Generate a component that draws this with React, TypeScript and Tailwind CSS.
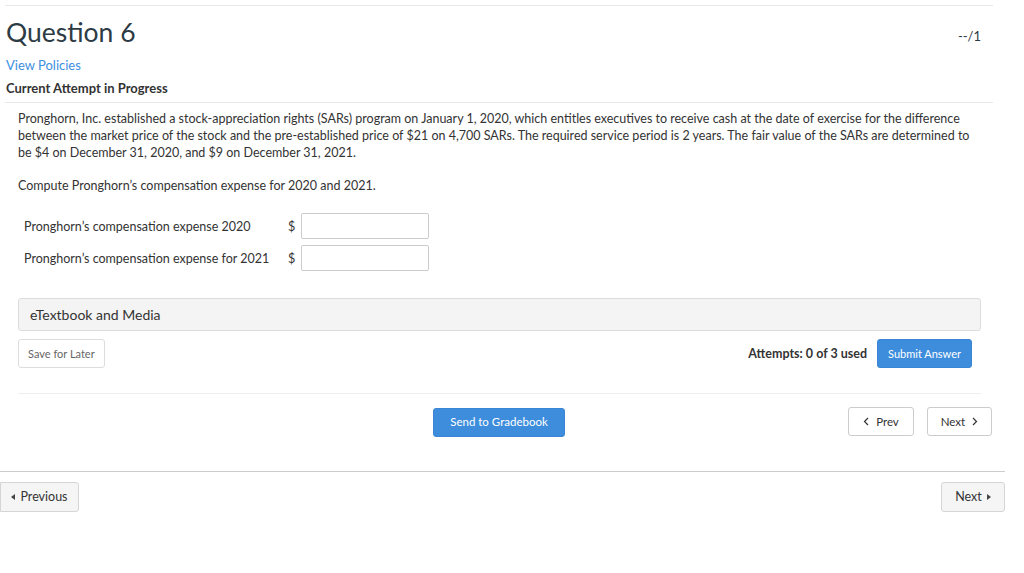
import React from "react";

export default function App() {
  return (
    <div className="w-[1005px] bg-white text-[#333]" style={{ fontFamily: "Lato, 'Open Sans', sans-serif" }}>
      <div className="pl-[5px] pr-[12px]">
        <div className="border-t border-[#e8e8e8] mt-[5px]">
          <div className="flex justify-between items-start pl-[1px] pr-[12px] pt-[9px]">
            <h1 className="text-[26.5px] leading-[34px] text-[#2d3b45]">Question 6</h1>
            <div className="text-[13px] mt-[12px] text-[#2d3b45]">--/1</div>
          </div>
          <div className="pl-[1px] mt-[8px] text-[13px] leading-[16px] text-[#3d8fe0]">View Policies</div>
          <div className="pl-[1px] mt-[7px] text-[13px] leading-[16px] font-bold text-[#333]">Current Attempt in Progress</div>
          <div className="border-t border-[#e8e8e8] mt-[6px]">
            <div className="pl-[13px] pr-[12px] pt-[7px] text-[12.5px] leading-[17px]">
              <p>
                Pronghorn, Inc. established a stock-appreciation rights (SARs) program on January 1, 2020, which entitles executives to receive cash at the date of exercise for the difference between the market price of the stock and the pre-established price of $21 on 4,700 SARs. The required service period is 2 years. The fair value of the SARs are determined to be $4 on December 31, 2020, and $9 on December 31, 2021.
              </p>
              <p className="mt-[16px]">Compute Pronghorn’s compensation expense for 2020 and 2021.</p>
              <div className="mt-[19px] flex flex-col gap-[6px] pl-[6px]">
                <div className="flex items-center">
                  <span className="w-[264px] text-[12.5px]">Pronghorn’s compensation expense 2020</span>
                  <span className="w-[13px] text-[12.5px]">$</span>
                  <input className="w-[128px] h-[26px] border border-[#ccc] rounded-[2px] outline-none" />
                </div>
                <div className="flex items-center">
                  <span className="w-[264px] text-[12.5px]">Pronghorn’s compensation expense for 2021</span>
                  <span className="w-[13px] text-[12.5px]">$</span>
                  <input className="w-[128px] h-[26px] border border-[#ccc] rounded-[2px] outline-none" />
                </div>
              </div>
              <div className="mt-[27px] h-[33px] bg-[#f4f4f4] border border-[#dcdcdc] rounded-[3px] flex items-center pl-[11px] text-[14px]">
                eTextbook and Media
              </div>
              <div className="mt-[8px] flex items-center justify-between pr-[9px]">
                <button className="h-[29px] px-[9px] border border-[#ddd] rounded-[3px] bg-white text-[11px] text-[#666]">Save for Later</button>
                <div className="flex items-center gap-[10px]">
                  <span className="text-[12.5px] font-bold">Attempts: 0 of 3 used</span>
                  <button className="h-[29px] px-[10px] rounded-[3px] bg-[#3d8ddc] border border-[#3a86d4] text-white text-[11px]">Submit Answer</button>
                </div>
              </div>
              <div className="mt-[25px] border-t border-[#eee]" />
            </div>
            <div className="relative flex items-center h-[30px] mt-[13px] pr-[1px]">
              <div className="flex-1 flex justify-center pl-[1px]">
                <button className="h-[29px] w-[132px] rounded-[3px] bg-[#3d8ddc] border border-[#3a86d4] text-white text-[11.5px]">Send to Gradebook</button>
              </div>
              <div className="absolute right-[1px] top-0 flex gap-[13px]">
                <button className="h-[29px] w-[66px] border border-[#ccc] rounded-[3px] bg-white text-[11.5px] flex items-center justify-center gap-[7px]">
                  <svg width="6" height="9" viewBox="0 0 6 9" fill="none" stroke="#333" strokeWidth="1.2"><path d="M5 1 L1.5 4.5 L5 8" /></svg>
                  Prev
                </button>
                <button className="h-[29px] w-[65px] border border-[#ccc] rounded-[3px] bg-white text-[11.5px] flex items-center justify-center gap-[7px]">
                  Next
                  <svg width="6" height="9" viewBox="0 0 6 9" fill="none" stroke="#333" strokeWidth="1.2"><path d="M1 1 L4.5 4.5 L1 8" /></svg>
                </button>
              </div>
            </div>
          </div>
        </div>
      </div>
      <div className="mt-[34px] border-t border-[#ccc] pt-[10px] flex justify-between">
        <button className="h-[30px] w-[79px] border border-[#d5d5d5] rounded-r-[3px] bg-[#f5f5f5] text-[12.5px] flex items-center justify-center gap-[5px]">
          <svg width="4" height="6" viewBox="0 0 4 6"><path d="M4 0 L0 3 L4 6 Z" fill="#444" /></svg>
          Previous
        </button>
        <button className="h-[30px] w-[64px] border border-[#d5d5d5] rounded-[3px] bg-[#f5f5f5] text-[12.5px] flex items-center justify-center gap-[5px]">
          Next
          <svg width="4" height="6" viewBox="0 0 4 6"><path d="M0 0 L4 3 L0 6 Z" fill="#444" /></svg>
        </button>
      </div>
    </div>
  );
}
